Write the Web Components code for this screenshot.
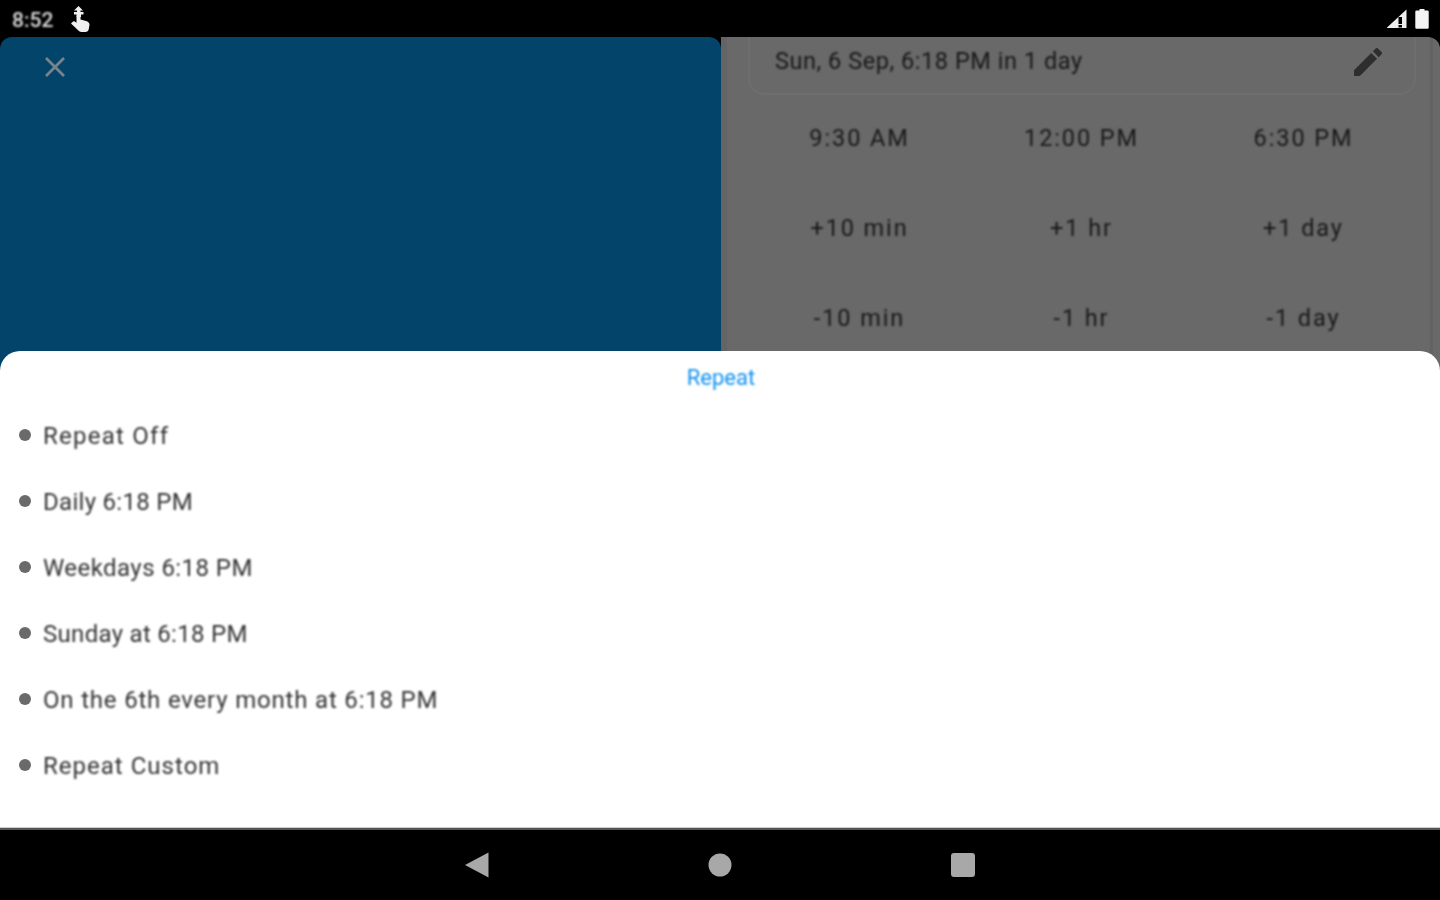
<!DOCTYPE html>
<html lang="en">
<head>
<meta charset="utf-8">
<title>Repeat</title>
<style>
    html, body { margin: 0; height: 100%; background: #000; }
    body { font-family: Roboto, "Open Sans", sans-serif; }
</style>
</head>
<body>
<app-screen></app-screen>

<script>
(function () {
    // small helper, every element just clones its own template
    function define(name, html) {
        const template = document.createElement('template');
        template.innerHTML = html;
        customElements.define(name, class extends HTMLElement {
            constructor() {
                super();
                this.attachShadow({ mode: 'open' });
                this.shadowRoot.appendChild(template.content.cloneNode(true));
            }
        });
    }

    define('status-bar', `
        <style>
            :host {
                display: flex;
                align-items: center;
                height: 37px;
                flex: none;
                background: #000;
                color: #ddd;
                padding: 0 11px 0 12px;
                box-sizing: border-box;
                font: 500 21px Roboto, sans-serif;
            }
            span { filter: blur(0.8px); padding-top: 2px; }
            .touch { margin-left: 17px; }
            .signal { margin-left: auto; }
            .battery { margin-left: 8px; }
            svg { display: block; filter: blur(0.6px); }
        </style>
        <span>8:52</span>
        <svg class="touch" width="20" height="26" viewBox="0 0 20 26" fill="#f0f0f0">
            <path d="M8.500 0l4.500 4.500h-2.500v1.500h3V8.500h-2.500V11H6.500V8.500H4V6h3V4.500H4z"/>
            <path d="M6.500 11a2 2 0 0 1 4 0v2.500l5.500 1.500c2 .6 3.800 2 3.500 4l-.7 4c-.3 1.800-1.700 3-3.500 3h-4c-1.200 0-2.200-.5-2.900-1.400L1 17.500l1.500-1.500c.8-.8 1.700-.8 2.500-.2l1.500 1z"/>
        </svg>
        <svg class="signal" width="21" height="20" viewBox="0 0 21 20" fill="#eee">
            <path fill-rule="evenodd" d="M20.500 .5v18.500H.5zM12.500 8v7h3.500V8zm0 8v2.500h3.500V16z"/>
        </svg>
        <svg class="battery" width="14" height="20" viewBox="0 0 14 20" fill="#f4f4f4">
            <path d="M4.500 0h5v1.500H12.500a1.200 1.200 0 0 1 1.200 1.200V18.500a1.200 1.200 0 0 1-1.200 1.200H1.500A1.200 1.200 0 0 1 .3 18.500V2.700A1.200 1.200 0 0 1 1.500 1.500H4.500z"/>
        </svg>`);

    define('close-panel', `
        <style>
            :host {
                display: block;
                width: 721px;
                flex: none;
                background: #03456a;
                border-radius: 0 12px 0 0;
                padding: 20px 0 0 45px;
                box-sizing: border-box;
            }
            svg { display: block; filter: blur(0.5px); }
        </style>
        <svg width="20" height="20" viewBox="0 0 20 20" stroke="#77848b" stroke-width="2.800" fill="none">
            <path d="M1 1l18 18M19 1L1 19"/>
        </svg>`);

    define('time-chip', `
        <style>
            :host {
                display: flex;
                align-items: center;
                justify-content: center;
                height: 90px;
                color: #181818;
                font: 400 23.500px Roboto, sans-serif;
                letter-spacing: 1.900px;
                filter: blur(0.8px);
            }
        </style>
        <slot></slot>`);

    define('date-card', `
        <style>
            :host {
                display: flex;
                align-items: center;
                justify-content: space-between;
                height: 58px;
                margin: 0 16px 0 21px;
                padding: 0 32px 7px 25px;
                box-sizing: border-box;
                border: solid #6e6e6e;
                border-width: 0 2px 2px 2px;
                border-radius: 0 0 16px 16px;
                color: #181818;
                font: 400 23.500px Roboto, sans-serif;
                letter-spacing: .55px;
            }
            span { filter: blur(0.8px); padding-bottom: 1px; }
            svg { display: block; filter: blur(0.5px); }
        </style>
        <span><slot></slot></span>
        <svg width="28" height="28" viewBox="3 3 18 18" fill="#2e2e2e">
            <path d="M3 17.250V21h3.750L17.810 9.940l-3.750-3.750L3 17.250zM20.710 7.040a1 1 0 0 0 0-1.410l-2.340-2.340a1 1 0 0 0-1.410 0l-1.830 1.830 3.750 3.750 1.830-1.830z"/>
        </svg>`);

    define('time-panel', `
        <style>
            :host {
                display: block;
                flex: 1;
                background: linear-gradient(to left, #696969 0 7px, #626262 7px 10px, #696969 10px);
                box-sizing: border-box;
                padding-right: 8px;
                border-left: 6px solid #646464;
            }
            .grid {
                display: grid;
                grid-template-columns: repeat(3, 222px);
                justify-content: center;
                padding: 0 0 0 4px;
                margin-top: -2px;
            }
        </style>
        <date-card>Sun, 6 Sep, 6:18 PM in 1 day</date-card>
        <div class="grid">
            <time-chip>9:30 AM</time-chip>
            <time-chip>12:00 PM</time-chip>
            <time-chip>6:30 PM</time-chip>
            <time-chip>+10 min</time-chip>
            <time-chip>+1 hr</time-chip>
            <time-chip>+1 day</time-chip>
            <time-chip>-10 min</time-chip>
            <time-chip>-1 hr</time-chip>
            <time-chip>-1 day</time-chip>
        </div>`);

    define('repeat-option', `
        <style>
            :host {
                display: flex;
                align-items: center;
                height: 66px;
                padding-left: 19px;
                color: #333;
                font: 400 24px Roboto, sans-serif;
                letter-spacing: var(--track, .3px);
            }
            i {
                width: 12px;
                height: 12px;
                margin-right: 12px;
                border-radius: 50%;
                background: #6a6a6a;
                filter: blur(0.6px);
            }
            span { filter: blur(0.8px); padding-top: 1px; }
        </style>
        <i></i><span><slot></slot></span>`);

    define('repeat-sheet', `
        <style>
            :host {
                display: block;
                flex: 1;
                margin-top: -22px;
                background: #fff;
                border-radius: 20px 20px 0 0;
                border-bottom: 1px solid #ccc;
                box-sizing: border-box;
            }
            h2 {
                margin: 0;
                height: 51px;
                text-align: center;
                color: #0f92f0;
                font: 400 22px/53px Roboto, sans-serif;
                padding-left: 2px;
                filter: blur(0.8px);
            }
        </style>
        <h2>Repeat</h2>
        <repeat-option style="--track:1.250px">Repeat Off</repeat-option>
        <repeat-option style="--track:.290px">Daily 6:18 PM</repeat-option>
        <repeat-option style="--track:.440px">Weekdays 6:18 PM</repeat-option>
        <repeat-option>Sunday at 6:18 PM</repeat-option>
        <repeat-option style="--track:.810px">On the 6th every month at 6:18 PM</repeat-option>
        <repeat-option style="--track:1.020px">Repeat Custom</repeat-option>`);

    define('nav-bar', `
        <style>
            :host {
                display: flex;
                align-items: center;
                justify-content: center;
                gap: 219px;
                height: 72px;
                flex: none;
                background: #000;
                border-top: 2px solid #555;
                box-sizing: border-box;
            }
            svg { display: block; filter: blur(0.5px); }
        </style>
        <svg width="24" height="26" viewBox="0 0 24 26" fill="#a8a8a8"><path d="M23.500 .5v25L0 13z"/></svg>
        <svg width="24" height="24" viewBox="0 0 24 24" fill="#a8a8a8"><circle cx="12" cy="12" r="11.500"/></svg>
        <svg width="24" height="24" viewBox="0 0 24 24" fill="#a8a8a8"><rect width="24" height="24" rx="3"/></svg>`);

    define('app-screen', `
        <style>
            :host {
                display: flex;
                flex-direction: column;
                height: 900px;
                overflow: hidden;
                background: #000;
            }
            .app {
                display: flex;
                height: 336px;
                flex: none;
                border-radius: 12px 12px 0 0;
                overflow: hidden;
            }
        </style>
        <status-bar></status-bar>
        <div class="app">
            <close-panel></close-panel>
            <time-panel></time-panel>
        </div>
        <repeat-sheet></repeat-sheet>
        <nav-bar></nav-bar>`);
})();
</script>
</body>
</html>
